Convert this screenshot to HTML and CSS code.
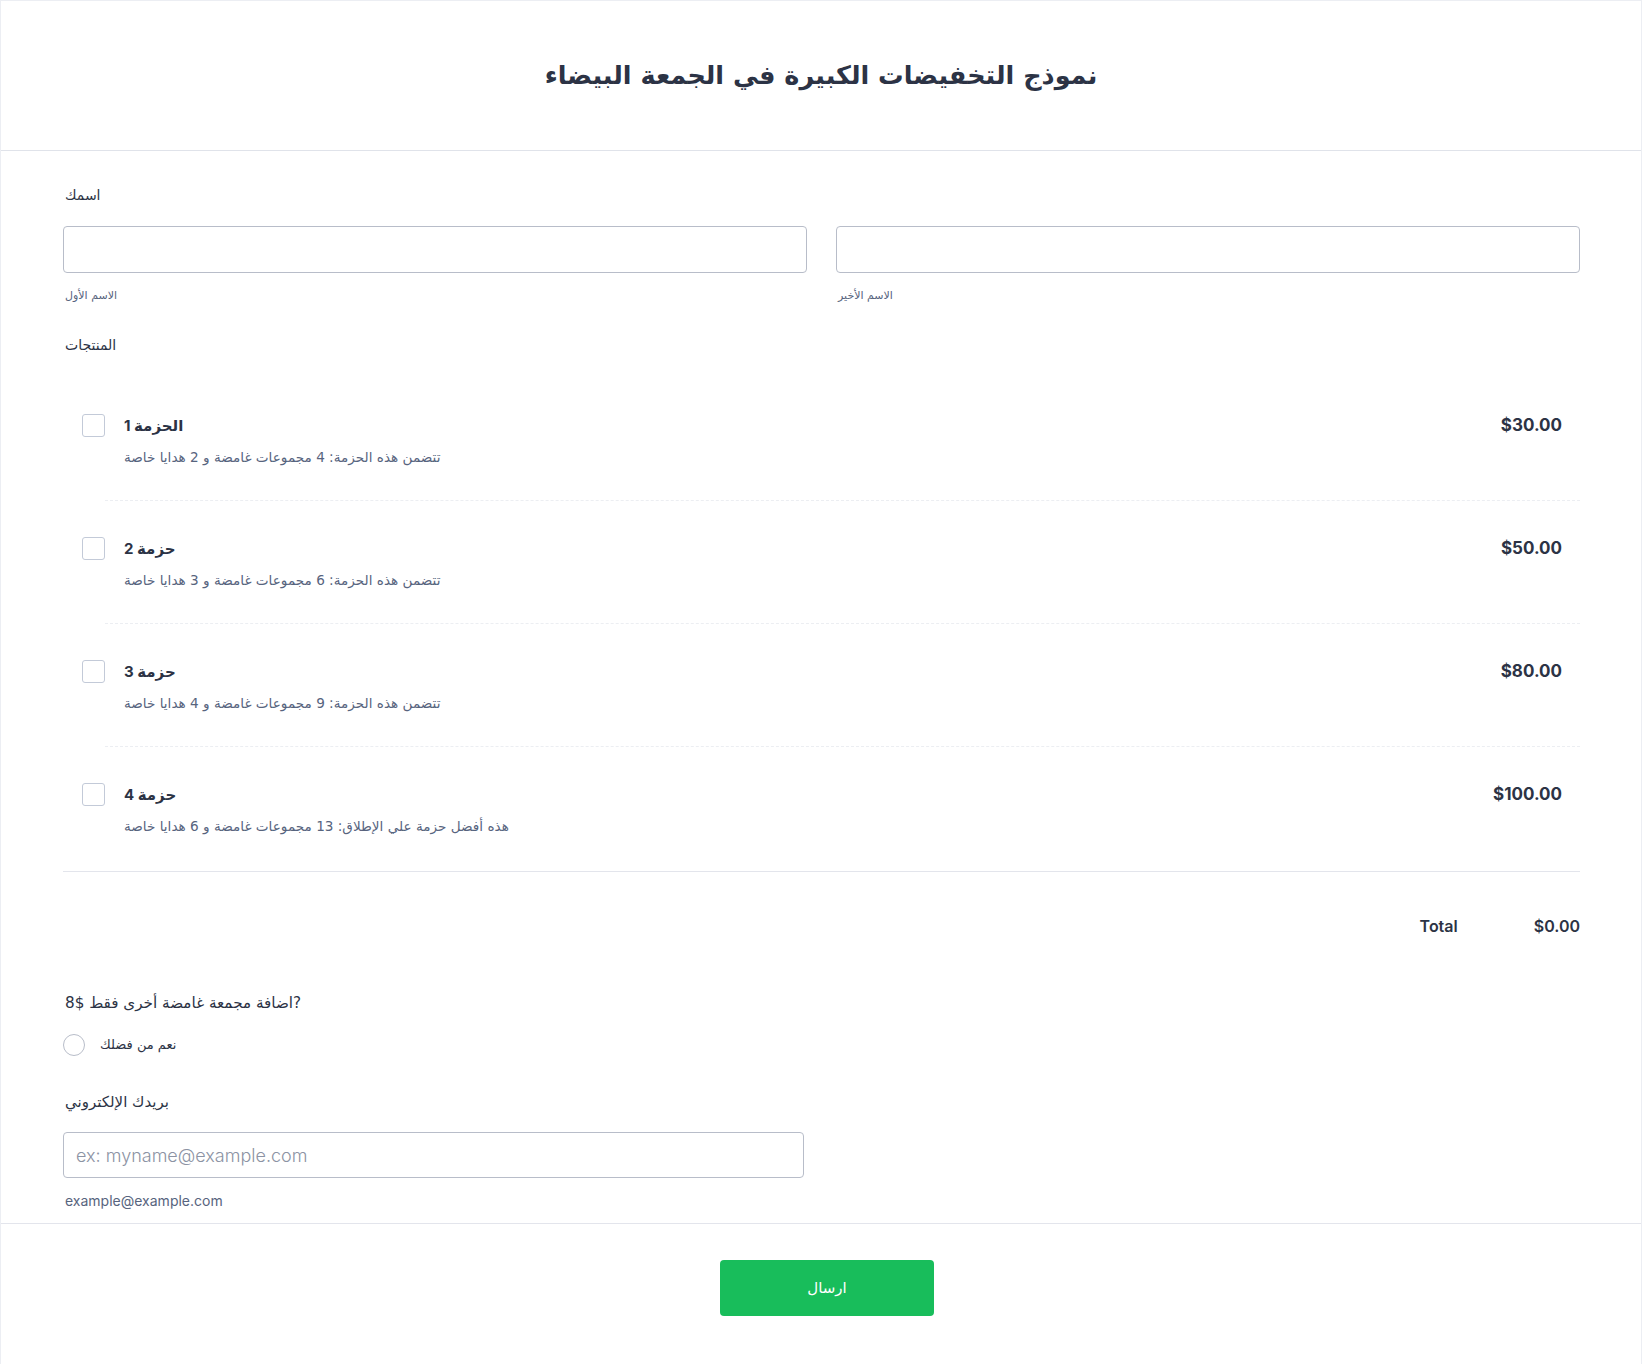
FILE: index.html
```html
<!DOCTYPE html>
<html lang="ar">
<head>
<meta charset="utf-8">
<title>نموذج التخفيضات الكبيرة في الجمعة البيضاء</title>
<link rel="stylesheet" href="styles.css">
</head>
<body>
<div class="page">
  <header class="header">
    <h1 class="title">نموذج التخفيضات الكبيرة في الجمعة البيضاء</h1>
  </header>
  <main class="main">
    <div class="label name-label">اسمك</div>
    <div class="two-col">
      <div class="field">
        <div class="input"></div>
        <div class="sublabel">الاسم الأول</div>
      </div>
      <div class="field">
        <div class="input"></div>
        <div class="sublabel">الاسم الأخير</div>
      </div>
    </div>

    <div class="label products-label">المنتجات</div>
    <div class="products">
      <div class="product">
        <span class="checkbox"></span>
        <div class="product-body">
          <div class="product-title">الحزمة 1</div>
          <div class="product-desc">تتضمن هذه الحزمة: 4 مجموعات غامضة و 2 هدايا خاصة</div>
        </div>
        <div class="price">$30.00</div>
      </div>
      <div class="product">
        <span class="checkbox"></span>
        <div class="product-body">
          <div class="product-title">حزمة 2</div>
          <div class="product-desc">تتضمن هذه الحزمة: 6 مجموعات غامضة و 3 هدايا خاصة</div>
        </div>
        <div class="price">$50.00</div>
      </div>
      <div class="product">
        <span class="checkbox"></span>
        <div class="product-body">
          <div class="product-title">حزمة 3</div>
          <div class="product-desc">تتضمن هذه الحزمة: 9 مجموعات غامضة و 4 هدايا خاصة</div>
        </div>
        <div class="price">$80.00</div>
      </div>
      <div class="product last">
        <span class="checkbox"></span>
        <div class="product-body">
          <div class="product-title">حزمة 4</div>
          <div class="product-desc">هذه أفضل حزمة علي الإطلاق: 13 مجموعات غامضة و 6 هدايا خاصة</div>
        </div>
        <div class="price">$100.00</div>
      </div>
    </div>

    <div class="total-row">
      <span class="total-label">Total</span>
      <span class="total-value">$0.00</span>
    </div>

    <div class="question">اضافة مجمعة غامضة أخرى فقط $8?</div>
    <div class="radio-row">
      <span class="radio"></span>
      <span class="radio-label">نعم من فضلك</span>
    </div>

    <div class="label email-label">بريدك الإلكتروني</div>
    <div class="two-col">
      <div class="field">
        <div class="input email-input"><span class="placeholder">ex: myname@example.com</span></div>
        <div class="email-sub">example@example.com</div>
      </div>
    </div>
  </main>
  <footer class="footer">
    <button class="submit" type="button">ارسال</button>
  </footer>
</div>
</body>
</html>
```

FILE: styles.css
```css
* { box-sizing: border-box; }

html, body {
  margin: 0;
  padding: 0;
  background: #ffffff;
}

body {
  font-family: Inter, "DejaVu Sans", sans-serif;
  color: #2c3345;
}

.page {
  border: 1px solid #eceef3;
  border-bottom: none;
  min-height: 1364px;
}

.header {
  height: 150px;
  border-bottom: 1px solid #e0e3ea;
  display: flex;
  align-items: center;
  justify-content: center;
}

.title {
  margin: 0;
  font-family: "DejaVu Sans", sans-serif;
  font-weight: 700;
  font-size: 25.5px;
  color: #2c3345;
  line-height: 40px;
  padding-bottom: 2px;
}

.main {
  padding: 0 61px 0 62px;
  display: flex;
  flex-direction: column;
}

.label {
  font-family: "DejaVu Sans", sans-serif;
  font-size: 14px;
  line-height: 20px;
  color: #2c3345;
  padding-left: 2px;
}

.name-label { margin-top: 34px; }

.two-col {
  display: grid;
  grid-template-columns: 1fr 1fr;
  column-gap: 29px;
  margin-top: 21px;
}

.input {
  height: 47px;
  border: 1px solid #b8bdc9;
  border-radius: 4px;
  background: #fff;
}

.sublabel {
  font-family: "DejaVu Sans", sans-serif;
  font-size: 11px;
  line-height: 16px;
  color: #57647e;
  margin-top: 15px;
  padding-left: 2px;
}

.products-label { margin-top: 31px; }

.products {
  margin-top: 23px;
  border-bottom: 1px solid #e3e5ec;
  padding-bottom: 2px;
}

.product {
  margin-left: 42px;
  padding: 36px 18px 33px 0;
  border-bottom: 1px dashed #eceef2;
  display: flex;
  align-items: flex-start;
}

.product.last { border-bottom: none; }

.checkbox {
  width: 23px;
  height: 23px;
  margin-left: -23px;
  margin-right: 19px;
  border: 1px solid #c3cad8;
  border-radius: 3px;
  flex: none;
  background: #fff;
}

.product-body {
  flex: 1;
}

.product-title {
  font-family: Inter, "DejaVu Sans", sans-serif;
  font-weight: 700;
  font-size: 15px;
  line-height: 23px;
  color: #2c3345;
}

.product-desc {
  font-family: "DejaVu Sans", sans-serif;
  font-size: 13.6px;
  line-height: 20px;
  margin-top: 10px;
  color: #57647e;
}

.price {
  font-family: Inter, sans-serif;
  font-weight: 700;
  font-size: 17px;
  line-height: 23px;
  color: #2c3345;
}

.total-row {
  margin-top: 44px;
  display: flex;
  justify-content: flex-end;
  align-items: center;
  line-height: 20px;
  font-family: Inter, sans-serif;
  font-weight: 600;
  font-size: 16px;
  color: #2c3345;
}

.total-value { margin-left: 76px; }

.question {
  margin-top: 55px;
  font-family: "DejaVu Sans", sans-serif;
  font-size: 15.2px;
  line-height: 24px;
  color: #2c3345;
  padding-left: 2px;
}

.radio-row {
  margin-top: 19px;
  display: flex;
  align-items: center;
}

.radio {
  width: 22px;
  height: 22px;
  border: 1px solid #b8bdc9;
  border-radius: 50%;
  margin-right: 15px;
  flex: none;
}

.radio-label {
  font-family: "DejaVu Sans", sans-serif;
  font-size: 13px;
  line-height: 20px;
  color: #2c3345;
}

.email-label {
  margin-top: 36px;
  font-size: 15px;
}

.two-col:last-child { margin-top: 20px; }

.email-input {
  height: 46px;
  display: flex;
  align-items: center;
  padding-left: 12px;
  margin-right: 3px;
}

.placeholder {
  font-family: Inter, sans-serif;
  font-weight: 300;
  font-size: 18px;
  color: #8c93a3;
}

.email-sub {
  margin-top: 14px;
  font-family: Inter, sans-serif;
  font-size: 14px;
  line-height: 18px;
  color: #57647e;
  padding-left: 2px;
}

.footer {
  margin-top: 13px;
  border-top: 1px solid #e3e5ec;
  display: flex;
  justify-content: center;
  padding-top: 36px;
}

.submit {
  width: 214px;
  height: 56px;
  margin-left: 12px;
  border: none;
  border-radius: 4px;
  background: #18bd5b;
  color: #ffffff;
  font-family: "DejaVu Sans", sans-serif;
  font-size: 15px;
  cursor: pointer;
}
```
